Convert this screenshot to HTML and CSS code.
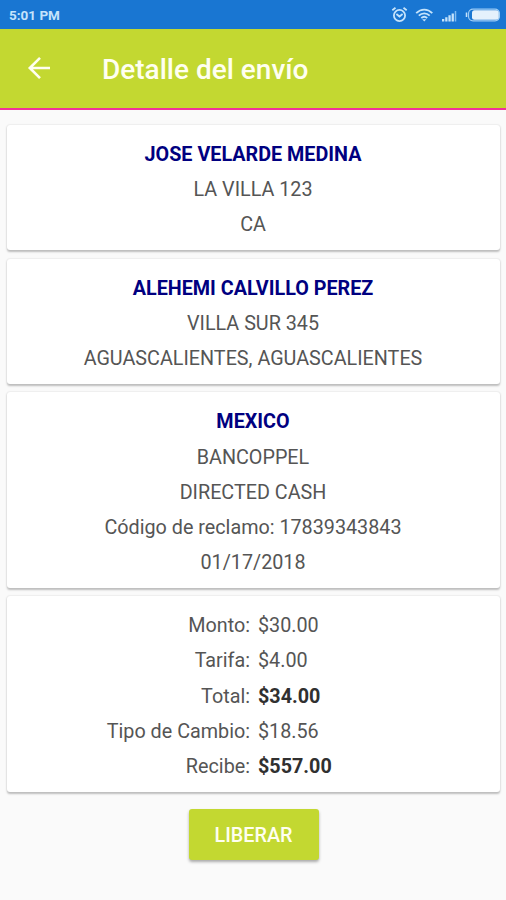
FILE: index.html
```html
<!DOCTYPE html>
<html lang="es">
<head>
<meta charset="utf-8">
<title>Detalle del envío</title>
<link rel="stylesheet" href="styles.css">
</head>
<body>
<div class="status">
  <span class="clock">5:01 PM</span>
  <svg class="status-icons" width="110" height="20" viewBox="0 0 110 20" fill="none" stroke="#c5e3fb" stroke-width="1.8">
    <circle cx="9.500" cy="10.500" r="5.600"/>
    <path d="M2.300 5.200 5.500 2.800M16.700 5.200 13.500 2.800M6.400 9l3.100 2.500L12.600 9"/>
    <path d="M26.200 8.200C31 3.400 37.500 3.400 42.300 8.200M28.800 10.700C32 7.600 36.500 7.600 39.700 10.700M31.300 13C33 11.500 35.500 11.500 37.200 13"/>
    <path d="M34.250 16.500 32.200 14.300h4.100z" fill="#c5e3fb" stroke="none"/>
    <path d="M52 14h2.300v2.500H52zM55.200 12.300h2.300v4.200h-2.300zM58.400 10.300h2.300v6.200h-2.300zM61.600 8.500h2.300v8h-2.300z" fill="#c5e3fb" stroke="none"/>
    <path d="M65.500 6v10.500" stroke="#82bdf0" stroke-width="1.500"/>
    <rect x="78.500" y="4.200" width="31" height="11.600" rx="4.500" stroke="#9dccf5" stroke-width="1.200"/>
    <rect x="82" y="5.300" width="26.800" height="9.400" rx="2.500" fill="#e5f1fc" stroke="none"/>
    <path d="M76.500 7.500v4.500" stroke-width="1.500"/>
  </svg>
</div>
<header class="toolbar">
  <svg class="back" width="24" height="24" viewBox="0 0 24 24" fill="none" stroke="#fffff0" stroke-width="2.600"><path d="M13 1.800 2.800 12l10.200 10.200M2.800 12H23"/></svg>
  <h1>Detalle del envío</h1>
</header>
<main>
  <section class="card">
    <h2>JOSE VELARDE MEDINA</h2>
    <p>LA VILLA 123</p>
    <p>CA</p>
  </section>
  <section class="card">
    <h2>ALEHEMI CALVILLO PEREZ</h2>
    <p>VILLA SUR 345</p>
    <p>AGUASCALIENTES, AGUASCALIENTES</p>
  </section>
  <section class="card">
    <h2>MEXICO</h2>
    <p>BANCOPPEL</p>
    <p>DIRECTED CASH</p>
    <p>Código de reclamo: 17839343843</p>
    <p>01/17/2018</p>
  </section>
  <dl class="card amounts">
    <dt>Monto:</dt><dd>$30.00</dd>
    <dt>Tarifa:</dt><dd>$4.00</dd>
    <dt>Total:</dt><dd class="strong">$34.00</dd>
    <dt>Tipo de Cambio:</dt><dd>$18.56</dd>
    <dt>Recibe:</dt><dd class="strong">$557.00</dd>
  </dl>
  <button class="release">LIBERAR</button>
</main>
</body>
</html>
```
FILE: styles.css
```css
* { box-sizing: border-box; }
body {
  margin: 0;
  height: 900px;
  overflow: hidden;
  background: #fafafa;
  color: #555;
  font: 19.75px Roboto, sans-serif;
}
h1, h2, p, dl, dd { margin: 0; }
.status {
  height: 28.5px;
  padding: 1px 6px 0 9px;
  display: flex;
  align-items: center;
  justify-content: space-between;
  background: #1976d2;
}
.clock { color: #c5e3fb; font-size: 13.5px; font-weight: 700; }
.toolbar {
  height: 81px;
  padding-left: 27px;
  display: flex;
  align-items: center;
  background: #c3d831;
  border-bottom: 2.5px solid #f0329a;
}
.toolbar h1 {
  margin-left: 51px;
  padding-top: 4px;
  color: #fffff0;
  font-size: 28px;
  font-weight: 500;
  line-height: 36px;
}
main {
  padding: 15.5px 6px 0 7px;
  display: flex;
  flex-direction: column;
  gap: 8.4px;
}
.card {
  padding: 12.1px 1px 7.7px 0;
  background: #fff;
  border-radius: 3px;
  box-shadow: 0 1.5px 2px #bdbdbd, 0 0 2px #dcdcdc;
  line-height: 35.15px;
  text-align: center;
}
.card h2 { color: #000080; font-size: 19.75px; font-weight: 700; line-height: inherit; }
.amounts {
  display: grid;
  grid-template-columns: 243px 1fr;
  column-gap: 8px;
}
.amounts dt { text-align: right; }
.amounts dd { text-align: left; }
.amounts .strong { color: #303030; font-weight: 700; }
.release {
  align-self: center;
  width: 130px;
  height: 51px;
  margin-top: 8.6px;
  padding: 2px 0 0;
  border: 0;
  border-radius: 3px;
  background: #c3d831;
  color: #fffff0;
  font: 500 19.75px Roboto, sans-serif;
  box-shadow: 0 2px 3px #aaa;
}
```
